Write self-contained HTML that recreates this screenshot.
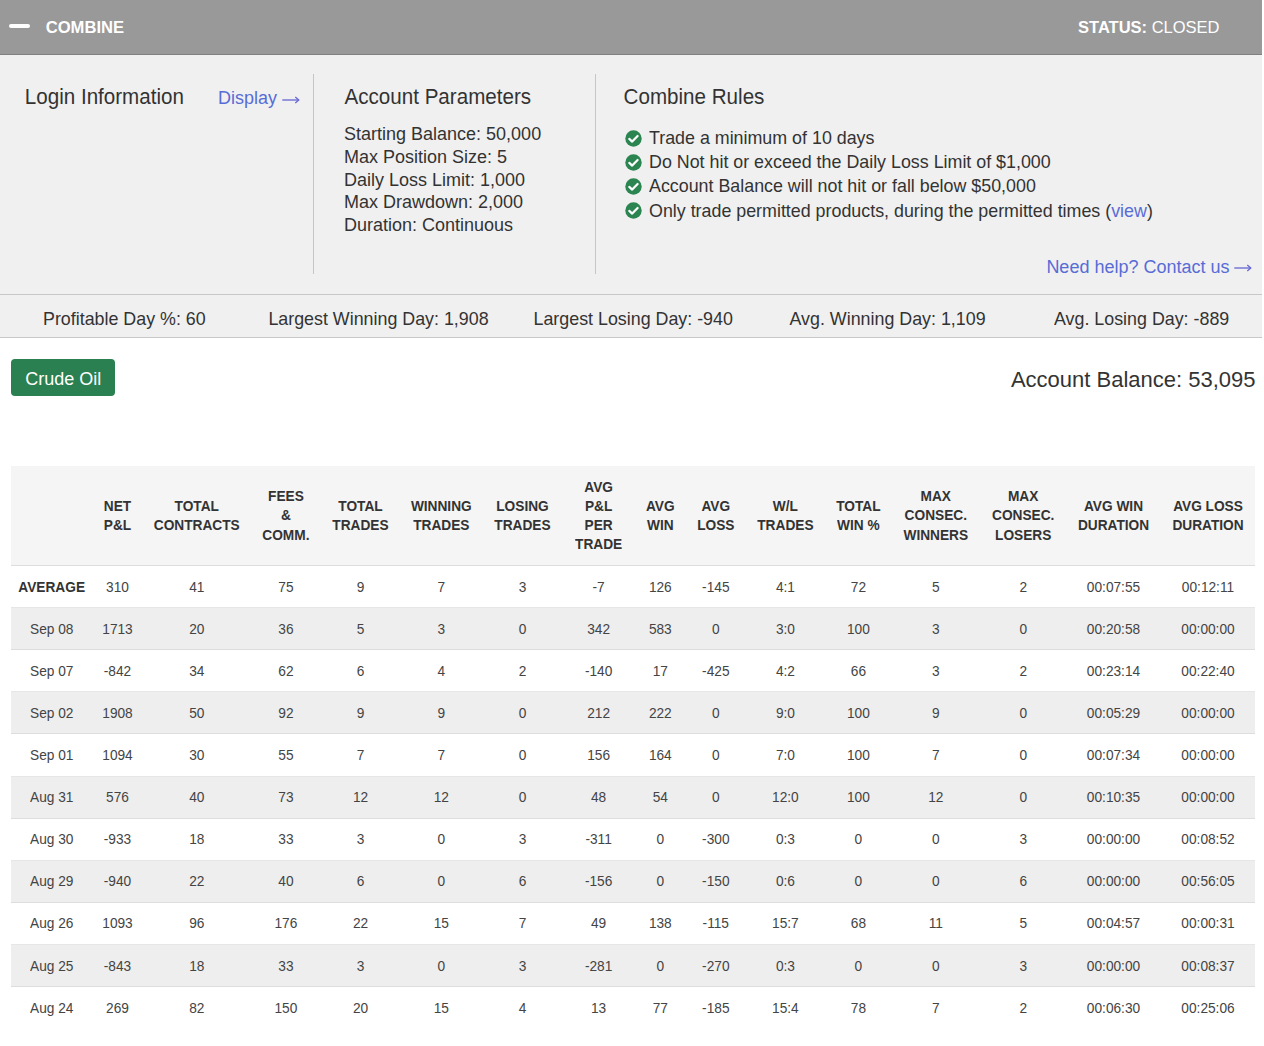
<!DOCTYPE html>
<html><head><meta charset="utf-8"><title>Combine</title>
<style>
html,body{margin:0;padding:0;background:#fff;overflow:hidden;}
body{width:1264px;height:1046px;overflow:hidden;position:relative;font-family:"Liberation Sans",sans-serif;}
.t{position:absolute;white-space:nowrap;line-height:1;}
</style></head><body>
<div style="position:absolute;left:0;top:0;width:1262px;height:54px;background:#999999;border-bottom:1px solid #808080"></div><div style="position:absolute;left:9px;top:24.3px;width:21px;height:3.6px;background:#fff;border-radius:2px"></div><div class="t" style="left:45.7px;top:19.75px;font-size:16.6px;color:#fff;font-weight:700;">COMBINE</div>
<div class="t" style="left:619.5px;width:600px;text-align:right;top:19.13px;font-size:16.5px;color:#fff;font-weight:400;"><b>STATUS:</b> CLOSED</div>
<div style="position:absolute;left:0;top:55px;width:1262px;height:239px;background:#f0f0f0"></div><div style="position:absolute;left:313px;top:74px;width:1px;height:200px;background:#c6c6c6"></div><div style="position:absolute;left:595px;top:74px;width:1px;height:200px;background:#c6c6c6"></div><div class="t" style="left:24.8px;top:86.96px;font-size:20.6px;color:#333;font-weight:400;transform:scaleY(1.07);transform-origin:0 17.44px;">Login Information</div>
<div class="t" style="left:218px;top:89.16px;font-size:18px;color:#586cd6;font-weight:400;">Display</div>
<svg style="position:absolute;left:282.30px;top:95.40px" width="18" height="10" viewBox="0 0 18 10"><path d="M0.3 5 H16.2" stroke="#6464d4" stroke-width="1.3" fill="none"/><path d="M13.3 2 L16.8 5 L13.3 8" stroke="#6464d4" stroke-width="1.2" fill="none" stroke-linejoin="miter"/></svg><div class="t" style="left:344.5px;top:86.96px;font-size:20.6px;color:#333;font-weight:400;transform:scaleY(1.07);transform-origin:0 17.44px;">Account Parameters</div>
<div class="t" style="left:344px;top:125.06px;font-size:18px;color:#333;font-weight:400;transform:scaleY(1.04);transform-origin:0 15.24px;">Starting Balance: 50,000</div>
<div class="t" style="left:344px;top:147.86px;font-size:18px;color:#333;font-weight:400;transform:scaleY(1.04);transform-origin:0 15.24px;">Max Position Size: 5</div>
<div class="t" style="left:344px;top:170.66px;font-size:18px;color:#333;font-weight:400;transform:scaleY(1.04);transform-origin:0 15.24px;">Daily Loss Limit: 1,000</div>
<div class="t" style="left:344px;top:193.46px;font-size:18px;color:#333;font-weight:400;transform:scaleY(1.04);transform-origin:0 15.24px;">Max Drawdown: 2,000</div>
<div class="t" style="left:344px;top:216.26px;font-size:18px;color:#333;font-weight:400;transform:scaleY(1.04);transform-origin:0 15.24px;">Duration: Continuous</div>
<div class="t" style="left:623.6px;top:86.76px;font-size:20.6px;color:#333;font-weight:400;transform:scaleY(1.07);transform-origin:0 17.44px;">Combine Rules</div>
<div style="position:absolute;left:625.3px;top:129.80px;width:17px;height:17px"><svg width="17" height="17" viewBox="0 0 17 17"><circle cx="8.5" cy="8.5" r="8.2" fill="#2b8550"/><path d="M4.3 8.9 L7.2 11.6 L12.6 6" stroke="#fff" stroke-width="2.2" fill="none" stroke-linecap="round" stroke-linejoin="round"/></svg></div><div class="t" style="left:649px;top:129.99px;font-size:17.85px;color:#333;font-weight:400;transform:scaleY(1.05);transform-origin:0 15.11px;">Trade a minimum of 10 days</div>
<div style="position:absolute;left:625.3px;top:153.90px;width:17px;height:17px"><svg width="17" height="17" viewBox="0 0 17 17"><circle cx="8.5" cy="8.5" r="8.2" fill="#2b8550"/><path d="M4.3 8.9 L7.2 11.6 L12.6 6" stroke="#fff" stroke-width="2.2" fill="none" stroke-linecap="round" stroke-linejoin="round"/></svg></div><div class="t" style="left:649px;top:154.19px;font-size:17.85px;color:#333;font-weight:400;transform:scaleY(1.05);transform-origin:0 15.11px;">Do Not hit or exceed the Daily Loss Limit of $1,000</div>
<div style="position:absolute;left:625.3px;top:178.00px;width:17px;height:17px"><svg width="17" height="17" viewBox="0 0 17 17"><circle cx="8.5" cy="8.5" r="8.2" fill="#2b8550"/><path d="M4.3 8.9 L7.2 11.6 L12.6 6" stroke="#fff" stroke-width="2.2" fill="none" stroke-linecap="round" stroke-linejoin="round"/></svg></div><div class="t" style="left:649px;top:178.39px;font-size:17.85px;color:#333;font-weight:400;transform:scaleY(1.05);transform-origin:0 15.11px;">Account Balance will not hit or fall below $50,000</div>
<div style="position:absolute;left:625.3px;top:202.10px;width:17px;height:17px"><svg width="17" height="17" viewBox="0 0 17 17"><circle cx="8.5" cy="8.5" r="8.2" fill="#2b8550"/><path d="M4.3 8.9 L7.2 11.6 L12.6 6" stroke="#fff" stroke-width="2.2" fill="none" stroke-linecap="round" stroke-linejoin="round"/></svg></div><div class="t" style="left:649px;top:202.59px;font-size:17.85px;color:#333;font-weight:400;transform:scaleY(1.05);transform-origin:0 15.11px;">Only trade permitted products, during the permitted times (<span style="color:#586cd6">view</span>)</div>
<div class="t" style="left:629.5px;width:600px;text-align:right;top:257.56px;font-size:18px;color:#586cd6;font-weight:400;">Need help? Contact us</div>
<svg style="position:absolute;left:1234.20px;top:263.20px" width="18" height="10" viewBox="0 0 18 10"><path d="M0.3 5 H16.2" stroke="#6464d4" stroke-width="1.3" fill="none"/><path d="M13.3 2 L16.8 5 L13.3 8" stroke="#6464d4" stroke-width="1.2" fill="none" stroke-linejoin="miter"/></svg><div style="position:absolute;left:0;top:294px;width:1262px;height:42px;background:#f0f0f0;border-top:1px solid #c8c8c8;border-bottom:1px solid #c8c8c8"></div><div class="t" style="left:43.0px;top:310.79px;font-size:17.85px;color:#333;font-weight:400;transform:scaleY(1.05);transform-origin:0 15.11px;">Profitable Day %: 60</div>
<div class="t" style="left:268.4px;top:310.79px;font-size:17.85px;color:#333;font-weight:400;transform:scaleY(1.05);transform-origin:0 15.11px;">Largest Winning Day: 1,908</div>
<div class="t" style="left:533.5px;top:310.79px;font-size:17.85px;color:#333;font-weight:400;transform:scaleY(1.05);transform-origin:0 15.11px;">Largest Losing Day: -940</div>
<div class="t" style="left:789.5px;top:310.79px;font-size:17.85px;color:#333;font-weight:400;transform:scaleY(1.05);transform-origin:0 15.11px;">Avg. Winning Day: 1,109</div>
<div class="t" style="left:1054px;top:310.79px;font-size:17.85px;color:#333;font-weight:400;transform:scaleY(1.05);transform-origin:0 15.11px;">Avg. Losing Day: -889</div>
<div style="position:absolute;left:11px;top:359px;width:104px;height:37px;background:#2a8050;border-radius:4px"></div><div class="t" style="left:25.2px;top:369.66px;font-size:18px;color:#fff;font-weight:400;">Crude Oil</div>
<div class="t" style="left:655.5px;width:600px;text-align:right;top:368.58px;font-size:22px;color:#333;font-weight:400;">Account Balance: 53,095</div>
<div style="position:absolute;left:11px;top:466px;width:1244px;height:99px;background:#f5f5f5;border-bottom:1px solid #dddddd"></div><div class="t" style="left:-32.5px;width:300px;text-align:center;top:499.86px;font-size:13.7px;color:#333;font-weight:700;transform:scaleY(1.12);transform-origin:0 11.60px;">NET</div>
<div class="t" style="left:-32.5px;width:300px;text-align:center;top:518.96px;font-size:13.7px;color:#333;font-weight:700;transform:scaleY(1.12);transform-origin:0 11.60px;">P&amp;L</div>
<div class="t" style="left:46.80000000000001px;width:300px;text-align:center;top:499.86px;font-size:13.7px;color:#333;font-weight:700;transform:scaleY(1.12);transform-origin:0 11.60px;">TOTAL</div>
<div class="t" style="left:46.80000000000001px;width:300px;text-align:center;top:518.96px;font-size:13.7px;color:#333;font-weight:700;transform:scaleY(1.12);transform-origin:0 11.60px;">CONTRACTS</div>
<div class="t" style="left:135.89999999999998px;width:300px;text-align:center;top:490.31px;font-size:13.7px;color:#333;font-weight:700;transform:scaleY(1.12);transform-origin:0 11.60px;">FEES</div>
<div class="t" style="left:135.89999999999998px;width:300px;text-align:center;top:509.41px;font-size:13.7px;color:#333;font-weight:700;transform:scaleY(1.12);transform-origin:0 11.60px;">&amp;</div>
<div class="t" style="left:135.89999999999998px;width:300px;text-align:center;top:528.51px;font-size:13.7px;color:#333;font-weight:700;transform:scaleY(1.12);transform-origin:0 11.60px;">COMM.</div>
<div class="t" style="left:210.5px;width:300px;text-align:center;top:499.86px;font-size:13.7px;color:#333;font-weight:700;transform:scaleY(1.12);transform-origin:0 11.60px;">TOTAL</div>
<div class="t" style="left:210.5px;width:300px;text-align:center;top:518.96px;font-size:13.7px;color:#333;font-weight:700;transform:scaleY(1.12);transform-origin:0 11.60px;">TRADES</div>
<div class="t" style="left:291.3px;width:300px;text-align:center;top:499.86px;font-size:13.7px;color:#333;font-weight:700;transform:scaleY(1.12);transform-origin:0 11.60px;">WINNING</div>
<div class="t" style="left:291.3px;width:300px;text-align:center;top:518.96px;font-size:13.7px;color:#333;font-weight:700;transform:scaleY(1.12);transform-origin:0 11.60px;">TRADES</div>
<div class="t" style="left:372.5px;width:300px;text-align:center;top:499.86px;font-size:13.7px;color:#333;font-weight:700;transform:scaleY(1.12);transform-origin:0 11.60px;">LOSING</div>
<div class="t" style="left:372.5px;width:300px;text-align:center;top:518.96px;font-size:13.7px;color:#333;font-weight:700;transform:scaleY(1.12);transform-origin:0 11.60px;">TRADES</div>
<div class="t" style="left:448.6px;width:300px;text-align:center;top:480.76px;font-size:13.7px;color:#333;font-weight:700;transform:scaleY(1.12);transform-origin:0 11.60px;">AVG</div>
<div class="t" style="left:448.6px;width:300px;text-align:center;top:499.86px;font-size:13.7px;color:#333;font-weight:700;transform:scaleY(1.12);transform-origin:0 11.60px;">P&amp;L</div>
<div class="t" style="left:448.6px;width:300px;text-align:center;top:518.96px;font-size:13.7px;color:#333;font-weight:700;transform:scaleY(1.12);transform-origin:0 11.60px;">PER</div>
<div class="t" style="left:448.6px;width:300px;text-align:center;top:538.06px;font-size:13.7px;color:#333;font-weight:700;transform:scaleY(1.12);transform-origin:0 11.60px;">TRADE</div>
<div class="t" style="left:510.29999999999995px;width:300px;text-align:center;top:499.86px;font-size:13.7px;color:#333;font-weight:700;transform:scaleY(1.12);transform-origin:0 11.60px;">AVG</div>
<div class="t" style="left:510.29999999999995px;width:300px;text-align:center;top:518.96px;font-size:13.7px;color:#333;font-weight:700;transform:scaleY(1.12);transform-origin:0 11.60px;">WIN</div>
<div class="t" style="left:565.8px;width:300px;text-align:center;top:499.86px;font-size:13.7px;color:#333;font-weight:700;transform:scaleY(1.12);transform-origin:0 11.60px;">AVG</div>
<div class="t" style="left:565.8px;width:300px;text-align:center;top:518.96px;font-size:13.7px;color:#333;font-weight:700;transform:scaleY(1.12);transform-origin:0 11.60px;">LOSS</div>
<div class="t" style="left:635.4px;width:300px;text-align:center;top:499.86px;font-size:13.7px;color:#333;font-weight:700;transform:scaleY(1.12);transform-origin:0 11.60px;">W/L</div>
<div class="t" style="left:635.4px;width:300px;text-align:center;top:518.96px;font-size:13.7px;color:#333;font-weight:700;transform:scaleY(1.12);transform-origin:0 11.60px;">TRADES</div>
<div class="t" style="left:708.4px;width:300px;text-align:center;top:499.86px;font-size:13.7px;color:#333;font-weight:700;transform:scaleY(1.12);transform-origin:0 11.60px;">TOTAL</div>
<div class="t" style="left:708.4px;width:300px;text-align:center;top:518.96px;font-size:13.7px;color:#333;font-weight:700;transform:scaleY(1.12);transform-origin:0 11.60px;">WIN %</div>
<div class="t" style="left:785.8px;width:300px;text-align:center;top:490.31px;font-size:13.7px;color:#333;font-weight:700;transform:scaleY(1.12);transform-origin:0 11.60px;">MAX</div>
<div class="t" style="left:785.8px;width:300px;text-align:center;top:509.41px;font-size:13.7px;color:#333;font-weight:700;transform:scaleY(1.12);transform-origin:0 11.60px;">CONSEC.</div>
<div class="t" style="left:785.8px;width:300px;text-align:center;top:528.51px;font-size:13.7px;color:#333;font-weight:700;transform:scaleY(1.12);transform-origin:0 11.60px;">WINNERS</div>
<div class="t" style="left:873.2px;width:300px;text-align:center;top:490.31px;font-size:13.7px;color:#333;font-weight:700;transform:scaleY(1.12);transform-origin:0 11.60px;">MAX</div>
<div class="t" style="left:873.2px;width:300px;text-align:center;top:509.41px;font-size:13.7px;color:#333;font-weight:700;transform:scaleY(1.12);transform-origin:0 11.60px;">CONSEC.</div>
<div class="t" style="left:873.2px;width:300px;text-align:center;top:528.51px;font-size:13.7px;color:#333;font-weight:700;transform:scaleY(1.12);transform-origin:0 11.60px;">LOSERS</div>
<div class="t" style="left:963.5px;width:300px;text-align:center;top:499.86px;font-size:13.7px;color:#333;font-weight:700;transform:scaleY(1.12);transform-origin:0 11.60px;">AVG WIN</div>
<div class="t" style="left:963.5px;width:300px;text-align:center;top:518.96px;font-size:13.7px;color:#333;font-weight:700;transform:scaleY(1.12);transform-origin:0 11.60px;">DURATION</div>
<div class="t" style="left:1058px;width:300px;text-align:center;top:499.86px;font-size:13.7px;color:#333;font-weight:700;transform:scaleY(1.12);transform-origin:0 11.60px;">AVG LOSS</div>
<div class="t" style="left:1058px;width:300px;text-align:center;top:518.96px;font-size:13.7px;color:#333;font-weight:700;transform:scaleY(1.12);transform-origin:0 11.60px;">DURATION</div>
<div class="t" style="left:-98.3px;width:300px;text-align:center;top:580.60px;font-size:13.7px;color:#333;font-weight:700;transform:scaleY(1.12);transform-origin:0 11.60px;">AVERAGE</div>
<div class="t" style="left:-32.5px;width:300px;text-align:center;top:580.60px;font-size:13.7px;color:#444;font-weight:400;transform:scaleY(1.12);transform-origin:0 11.60px;">310</div>
<div class="t" style="left:46.80000000000001px;width:300px;text-align:center;top:580.60px;font-size:13.7px;color:#444;font-weight:400;transform:scaleY(1.12);transform-origin:0 11.60px;">41</div>
<div class="t" style="left:135.89999999999998px;width:300px;text-align:center;top:580.60px;font-size:13.7px;color:#444;font-weight:400;transform:scaleY(1.12);transform-origin:0 11.60px;">75</div>
<div class="t" style="left:210.5px;width:300px;text-align:center;top:580.60px;font-size:13.7px;color:#444;font-weight:400;transform:scaleY(1.12);transform-origin:0 11.60px;">9</div>
<div class="t" style="left:291.3px;width:300px;text-align:center;top:580.60px;font-size:13.7px;color:#444;font-weight:400;transform:scaleY(1.12);transform-origin:0 11.60px;">7</div>
<div class="t" style="left:372.5px;width:300px;text-align:center;top:580.60px;font-size:13.7px;color:#444;font-weight:400;transform:scaleY(1.12);transform-origin:0 11.60px;">3</div>
<div class="t" style="left:448.6px;width:300px;text-align:center;top:580.60px;font-size:13.7px;color:#444;font-weight:400;transform:scaleY(1.12);transform-origin:0 11.60px;">-7</div>
<div class="t" style="left:510.29999999999995px;width:300px;text-align:center;top:580.60px;font-size:13.7px;color:#444;font-weight:400;transform:scaleY(1.12);transform-origin:0 11.60px;">126</div>
<div class="t" style="left:565.8px;width:300px;text-align:center;top:580.60px;font-size:13.7px;color:#444;font-weight:400;transform:scaleY(1.12);transform-origin:0 11.60px;">-145</div>
<div class="t" style="left:635.4px;width:300px;text-align:center;top:580.60px;font-size:13.7px;color:#444;font-weight:400;transform:scaleY(1.12);transform-origin:0 11.60px;">4:1</div>
<div class="t" style="left:708.4px;width:300px;text-align:center;top:580.60px;font-size:13.7px;color:#444;font-weight:400;transform:scaleY(1.12);transform-origin:0 11.60px;">72</div>
<div class="t" style="left:785.8px;width:300px;text-align:center;top:580.60px;font-size:13.7px;color:#444;font-weight:400;transform:scaleY(1.12);transform-origin:0 11.60px;">5</div>
<div class="t" style="left:873.2px;width:300px;text-align:center;top:580.60px;font-size:13.7px;color:#444;font-weight:400;transform:scaleY(1.12);transform-origin:0 11.60px;">2</div>
<div class="t" style="left:963.5px;width:300px;text-align:center;top:580.60px;font-size:13.7px;color:#444;font-weight:400;transform:scaleY(1.12);transform-origin:0 11.60px;">00:07:55</div>
<div class="t" style="left:1058px;width:300px;text-align:center;top:580.60px;font-size:13.7px;color:#444;font-weight:400;transform:scaleY(1.12);transform-origin:0 11.60px;">00:12:11</div>
<div style="position:absolute;left:11px;top:607.10px;width:1244px;height:43px;box-sizing:border-box;background:#eeeeee;border-top:1px solid #e6e6e6;border-bottom:1px solid #dddddd"></div><div class="t" style="left:-98.3px;width:300px;text-align:center;top:622.70px;font-size:13.7px;color:#444;font-weight:400;transform:scaleY(1.12);transform-origin:0 11.60px;">Sep 08</div>
<div class="t" style="left:-32.5px;width:300px;text-align:center;top:622.70px;font-size:13.7px;color:#444;font-weight:400;transform:scaleY(1.12);transform-origin:0 11.60px;">1713</div>
<div class="t" style="left:46.80000000000001px;width:300px;text-align:center;top:622.70px;font-size:13.7px;color:#444;font-weight:400;transform:scaleY(1.12);transform-origin:0 11.60px;">20</div>
<div class="t" style="left:135.89999999999998px;width:300px;text-align:center;top:622.70px;font-size:13.7px;color:#444;font-weight:400;transform:scaleY(1.12);transform-origin:0 11.60px;">36</div>
<div class="t" style="left:210.5px;width:300px;text-align:center;top:622.70px;font-size:13.7px;color:#444;font-weight:400;transform:scaleY(1.12);transform-origin:0 11.60px;">5</div>
<div class="t" style="left:291.3px;width:300px;text-align:center;top:622.70px;font-size:13.7px;color:#444;font-weight:400;transform:scaleY(1.12);transform-origin:0 11.60px;">3</div>
<div class="t" style="left:372.5px;width:300px;text-align:center;top:622.70px;font-size:13.7px;color:#444;font-weight:400;transform:scaleY(1.12);transform-origin:0 11.60px;">0</div>
<div class="t" style="left:448.6px;width:300px;text-align:center;top:622.70px;font-size:13.7px;color:#444;font-weight:400;transform:scaleY(1.12);transform-origin:0 11.60px;">342</div>
<div class="t" style="left:510.29999999999995px;width:300px;text-align:center;top:622.70px;font-size:13.7px;color:#444;font-weight:400;transform:scaleY(1.12);transform-origin:0 11.60px;">583</div>
<div class="t" style="left:565.8px;width:300px;text-align:center;top:622.70px;font-size:13.7px;color:#444;font-weight:400;transform:scaleY(1.12);transform-origin:0 11.60px;">0</div>
<div class="t" style="left:635.4px;width:300px;text-align:center;top:622.70px;font-size:13.7px;color:#444;font-weight:400;transform:scaleY(1.12);transform-origin:0 11.60px;">3:0</div>
<div class="t" style="left:708.4px;width:300px;text-align:center;top:622.70px;font-size:13.7px;color:#444;font-weight:400;transform:scaleY(1.12);transform-origin:0 11.60px;">100</div>
<div class="t" style="left:785.8px;width:300px;text-align:center;top:622.70px;font-size:13.7px;color:#444;font-weight:400;transform:scaleY(1.12);transform-origin:0 11.60px;">3</div>
<div class="t" style="left:873.2px;width:300px;text-align:center;top:622.70px;font-size:13.7px;color:#444;font-weight:400;transform:scaleY(1.12);transform-origin:0 11.60px;">0</div>
<div class="t" style="left:963.5px;width:300px;text-align:center;top:622.70px;font-size:13.7px;color:#444;font-weight:400;transform:scaleY(1.12);transform-origin:0 11.60px;">00:20:58</div>
<div class="t" style="left:1058px;width:300px;text-align:center;top:622.70px;font-size:13.7px;color:#444;font-weight:400;transform:scaleY(1.12);transform-origin:0 11.60px;">00:00:00</div>
<div class="t" style="left:-98.3px;width:300px;text-align:center;top:664.80px;font-size:13.7px;color:#444;font-weight:400;transform:scaleY(1.12);transform-origin:0 11.60px;">Sep 07</div>
<div class="t" style="left:-32.5px;width:300px;text-align:center;top:664.80px;font-size:13.7px;color:#444;font-weight:400;transform:scaleY(1.12);transform-origin:0 11.60px;">-842</div>
<div class="t" style="left:46.80000000000001px;width:300px;text-align:center;top:664.80px;font-size:13.7px;color:#444;font-weight:400;transform:scaleY(1.12);transform-origin:0 11.60px;">34</div>
<div class="t" style="left:135.89999999999998px;width:300px;text-align:center;top:664.80px;font-size:13.7px;color:#444;font-weight:400;transform:scaleY(1.12);transform-origin:0 11.60px;">62</div>
<div class="t" style="left:210.5px;width:300px;text-align:center;top:664.80px;font-size:13.7px;color:#444;font-weight:400;transform:scaleY(1.12);transform-origin:0 11.60px;">6</div>
<div class="t" style="left:291.3px;width:300px;text-align:center;top:664.80px;font-size:13.7px;color:#444;font-weight:400;transform:scaleY(1.12);transform-origin:0 11.60px;">4</div>
<div class="t" style="left:372.5px;width:300px;text-align:center;top:664.80px;font-size:13.7px;color:#444;font-weight:400;transform:scaleY(1.12);transform-origin:0 11.60px;">2</div>
<div class="t" style="left:448.6px;width:300px;text-align:center;top:664.80px;font-size:13.7px;color:#444;font-weight:400;transform:scaleY(1.12);transform-origin:0 11.60px;">-140</div>
<div class="t" style="left:510.29999999999995px;width:300px;text-align:center;top:664.80px;font-size:13.7px;color:#444;font-weight:400;transform:scaleY(1.12);transform-origin:0 11.60px;">17</div>
<div class="t" style="left:565.8px;width:300px;text-align:center;top:664.80px;font-size:13.7px;color:#444;font-weight:400;transform:scaleY(1.12);transform-origin:0 11.60px;">-425</div>
<div class="t" style="left:635.4px;width:300px;text-align:center;top:664.80px;font-size:13.7px;color:#444;font-weight:400;transform:scaleY(1.12);transform-origin:0 11.60px;">4:2</div>
<div class="t" style="left:708.4px;width:300px;text-align:center;top:664.80px;font-size:13.7px;color:#444;font-weight:400;transform:scaleY(1.12);transform-origin:0 11.60px;">66</div>
<div class="t" style="left:785.8px;width:300px;text-align:center;top:664.80px;font-size:13.7px;color:#444;font-weight:400;transform:scaleY(1.12);transform-origin:0 11.60px;">3</div>
<div class="t" style="left:873.2px;width:300px;text-align:center;top:664.80px;font-size:13.7px;color:#444;font-weight:400;transform:scaleY(1.12);transform-origin:0 11.60px;">2</div>
<div class="t" style="left:963.5px;width:300px;text-align:center;top:664.80px;font-size:13.7px;color:#444;font-weight:400;transform:scaleY(1.12);transform-origin:0 11.60px;">00:23:14</div>
<div class="t" style="left:1058px;width:300px;text-align:center;top:664.80px;font-size:13.7px;color:#444;font-weight:400;transform:scaleY(1.12);transform-origin:0 11.60px;">00:22:40</div>
<div style="position:absolute;left:11px;top:691.30px;width:1244px;height:43px;box-sizing:border-box;background:#eeeeee;border-top:1px solid #e6e6e6;border-bottom:1px solid #dddddd"></div><div class="t" style="left:-98.3px;width:300px;text-align:center;top:706.90px;font-size:13.7px;color:#444;font-weight:400;transform:scaleY(1.12);transform-origin:0 11.60px;">Sep 02</div>
<div class="t" style="left:-32.5px;width:300px;text-align:center;top:706.90px;font-size:13.7px;color:#444;font-weight:400;transform:scaleY(1.12);transform-origin:0 11.60px;">1908</div>
<div class="t" style="left:46.80000000000001px;width:300px;text-align:center;top:706.90px;font-size:13.7px;color:#444;font-weight:400;transform:scaleY(1.12);transform-origin:0 11.60px;">50</div>
<div class="t" style="left:135.89999999999998px;width:300px;text-align:center;top:706.90px;font-size:13.7px;color:#444;font-weight:400;transform:scaleY(1.12);transform-origin:0 11.60px;">92</div>
<div class="t" style="left:210.5px;width:300px;text-align:center;top:706.90px;font-size:13.7px;color:#444;font-weight:400;transform:scaleY(1.12);transform-origin:0 11.60px;">9</div>
<div class="t" style="left:291.3px;width:300px;text-align:center;top:706.90px;font-size:13.7px;color:#444;font-weight:400;transform:scaleY(1.12);transform-origin:0 11.60px;">9</div>
<div class="t" style="left:372.5px;width:300px;text-align:center;top:706.90px;font-size:13.7px;color:#444;font-weight:400;transform:scaleY(1.12);transform-origin:0 11.60px;">0</div>
<div class="t" style="left:448.6px;width:300px;text-align:center;top:706.90px;font-size:13.7px;color:#444;font-weight:400;transform:scaleY(1.12);transform-origin:0 11.60px;">212</div>
<div class="t" style="left:510.29999999999995px;width:300px;text-align:center;top:706.90px;font-size:13.7px;color:#444;font-weight:400;transform:scaleY(1.12);transform-origin:0 11.60px;">222</div>
<div class="t" style="left:565.8px;width:300px;text-align:center;top:706.90px;font-size:13.7px;color:#444;font-weight:400;transform:scaleY(1.12);transform-origin:0 11.60px;">0</div>
<div class="t" style="left:635.4px;width:300px;text-align:center;top:706.90px;font-size:13.7px;color:#444;font-weight:400;transform:scaleY(1.12);transform-origin:0 11.60px;">9:0</div>
<div class="t" style="left:708.4px;width:300px;text-align:center;top:706.90px;font-size:13.7px;color:#444;font-weight:400;transform:scaleY(1.12);transform-origin:0 11.60px;">100</div>
<div class="t" style="left:785.8px;width:300px;text-align:center;top:706.90px;font-size:13.7px;color:#444;font-weight:400;transform:scaleY(1.12);transform-origin:0 11.60px;">9</div>
<div class="t" style="left:873.2px;width:300px;text-align:center;top:706.90px;font-size:13.7px;color:#444;font-weight:400;transform:scaleY(1.12);transform-origin:0 11.60px;">0</div>
<div class="t" style="left:963.5px;width:300px;text-align:center;top:706.90px;font-size:13.7px;color:#444;font-weight:400;transform:scaleY(1.12);transform-origin:0 11.60px;">00:05:29</div>
<div class="t" style="left:1058px;width:300px;text-align:center;top:706.90px;font-size:13.7px;color:#444;font-weight:400;transform:scaleY(1.12);transform-origin:0 11.60px;">00:00:00</div>
<div class="t" style="left:-98.3px;width:300px;text-align:center;top:749.00px;font-size:13.7px;color:#444;font-weight:400;transform:scaleY(1.12);transform-origin:0 11.60px;">Sep 01</div>
<div class="t" style="left:-32.5px;width:300px;text-align:center;top:749.00px;font-size:13.7px;color:#444;font-weight:400;transform:scaleY(1.12);transform-origin:0 11.60px;">1094</div>
<div class="t" style="left:46.80000000000001px;width:300px;text-align:center;top:749.00px;font-size:13.7px;color:#444;font-weight:400;transform:scaleY(1.12);transform-origin:0 11.60px;">30</div>
<div class="t" style="left:135.89999999999998px;width:300px;text-align:center;top:749.00px;font-size:13.7px;color:#444;font-weight:400;transform:scaleY(1.12);transform-origin:0 11.60px;">55</div>
<div class="t" style="left:210.5px;width:300px;text-align:center;top:749.00px;font-size:13.7px;color:#444;font-weight:400;transform:scaleY(1.12);transform-origin:0 11.60px;">7</div>
<div class="t" style="left:291.3px;width:300px;text-align:center;top:749.00px;font-size:13.7px;color:#444;font-weight:400;transform:scaleY(1.12);transform-origin:0 11.60px;">7</div>
<div class="t" style="left:372.5px;width:300px;text-align:center;top:749.00px;font-size:13.7px;color:#444;font-weight:400;transform:scaleY(1.12);transform-origin:0 11.60px;">0</div>
<div class="t" style="left:448.6px;width:300px;text-align:center;top:749.00px;font-size:13.7px;color:#444;font-weight:400;transform:scaleY(1.12);transform-origin:0 11.60px;">156</div>
<div class="t" style="left:510.29999999999995px;width:300px;text-align:center;top:749.00px;font-size:13.7px;color:#444;font-weight:400;transform:scaleY(1.12);transform-origin:0 11.60px;">164</div>
<div class="t" style="left:565.8px;width:300px;text-align:center;top:749.00px;font-size:13.7px;color:#444;font-weight:400;transform:scaleY(1.12);transform-origin:0 11.60px;">0</div>
<div class="t" style="left:635.4px;width:300px;text-align:center;top:749.00px;font-size:13.7px;color:#444;font-weight:400;transform:scaleY(1.12);transform-origin:0 11.60px;">7:0</div>
<div class="t" style="left:708.4px;width:300px;text-align:center;top:749.00px;font-size:13.7px;color:#444;font-weight:400;transform:scaleY(1.12);transform-origin:0 11.60px;">100</div>
<div class="t" style="left:785.8px;width:300px;text-align:center;top:749.00px;font-size:13.7px;color:#444;font-weight:400;transform:scaleY(1.12);transform-origin:0 11.60px;">7</div>
<div class="t" style="left:873.2px;width:300px;text-align:center;top:749.00px;font-size:13.7px;color:#444;font-weight:400;transform:scaleY(1.12);transform-origin:0 11.60px;">0</div>
<div class="t" style="left:963.5px;width:300px;text-align:center;top:749.00px;font-size:13.7px;color:#444;font-weight:400;transform:scaleY(1.12);transform-origin:0 11.60px;">00:07:34</div>
<div class="t" style="left:1058px;width:300px;text-align:center;top:749.00px;font-size:13.7px;color:#444;font-weight:400;transform:scaleY(1.12);transform-origin:0 11.60px;">00:00:00</div>
<div style="position:absolute;left:11px;top:775.50px;width:1244px;height:43px;box-sizing:border-box;background:#eeeeee;border-top:1px solid #e6e6e6;border-bottom:1px solid #dddddd"></div><div class="t" style="left:-98.3px;width:300px;text-align:center;top:791.10px;font-size:13.7px;color:#444;font-weight:400;transform:scaleY(1.12);transform-origin:0 11.60px;">Aug 31</div>
<div class="t" style="left:-32.5px;width:300px;text-align:center;top:791.10px;font-size:13.7px;color:#444;font-weight:400;transform:scaleY(1.12);transform-origin:0 11.60px;">576</div>
<div class="t" style="left:46.80000000000001px;width:300px;text-align:center;top:791.10px;font-size:13.7px;color:#444;font-weight:400;transform:scaleY(1.12);transform-origin:0 11.60px;">40</div>
<div class="t" style="left:135.89999999999998px;width:300px;text-align:center;top:791.10px;font-size:13.7px;color:#444;font-weight:400;transform:scaleY(1.12);transform-origin:0 11.60px;">73</div>
<div class="t" style="left:210.5px;width:300px;text-align:center;top:791.10px;font-size:13.7px;color:#444;font-weight:400;transform:scaleY(1.12);transform-origin:0 11.60px;">12</div>
<div class="t" style="left:291.3px;width:300px;text-align:center;top:791.10px;font-size:13.7px;color:#444;font-weight:400;transform:scaleY(1.12);transform-origin:0 11.60px;">12</div>
<div class="t" style="left:372.5px;width:300px;text-align:center;top:791.10px;font-size:13.7px;color:#444;font-weight:400;transform:scaleY(1.12);transform-origin:0 11.60px;">0</div>
<div class="t" style="left:448.6px;width:300px;text-align:center;top:791.10px;font-size:13.7px;color:#444;font-weight:400;transform:scaleY(1.12);transform-origin:0 11.60px;">48</div>
<div class="t" style="left:510.29999999999995px;width:300px;text-align:center;top:791.10px;font-size:13.7px;color:#444;font-weight:400;transform:scaleY(1.12);transform-origin:0 11.60px;">54</div>
<div class="t" style="left:565.8px;width:300px;text-align:center;top:791.10px;font-size:13.7px;color:#444;font-weight:400;transform:scaleY(1.12);transform-origin:0 11.60px;">0</div>
<div class="t" style="left:635.4px;width:300px;text-align:center;top:791.10px;font-size:13.7px;color:#444;font-weight:400;transform:scaleY(1.12);transform-origin:0 11.60px;">12:0</div>
<div class="t" style="left:708.4px;width:300px;text-align:center;top:791.10px;font-size:13.7px;color:#444;font-weight:400;transform:scaleY(1.12);transform-origin:0 11.60px;">100</div>
<div class="t" style="left:785.8px;width:300px;text-align:center;top:791.10px;font-size:13.7px;color:#444;font-weight:400;transform:scaleY(1.12);transform-origin:0 11.60px;">12</div>
<div class="t" style="left:873.2px;width:300px;text-align:center;top:791.10px;font-size:13.7px;color:#444;font-weight:400;transform:scaleY(1.12);transform-origin:0 11.60px;">0</div>
<div class="t" style="left:963.5px;width:300px;text-align:center;top:791.10px;font-size:13.7px;color:#444;font-weight:400;transform:scaleY(1.12);transform-origin:0 11.60px;">00:10:35</div>
<div class="t" style="left:1058px;width:300px;text-align:center;top:791.10px;font-size:13.7px;color:#444;font-weight:400;transform:scaleY(1.12);transform-origin:0 11.60px;">00:00:00</div>
<div class="t" style="left:-98.3px;width:300px;text-align:center;top:833.20px;font-size:13.7px;color:#444;font-weight:400;transform:scaleY(1.12);transform-origin:0 11.60px;">Aug 30</div>
<div class="t" style="left:-32.5px;width:300px;text-align:center;top:833.20px;font-size:13.7px;color:#444;font-weight:400;transform:scaleY(1.12);transform-origin:0 11.60px;">-933</div>
<div class="t" style="left:46.80000000000001px;width:300px;text-align:center;top:833.20px;font-size:13.7px;color:#444;font-weight:400;transform:scaleY(1.12);transform-origin:0 11.60px;">18</div>
<div class="t" style="left:135.89999999999998px;width:300px;text-align:center;top:833.20px;font-size:13.7px;color:#444;font-weight:400;transform:scaleY(1.12);transform-origin:0 11.60px;">33</div>
<div class="t" style="left:210.5px;width:300px;text-align:center;top:833.20px;font-size:13.7px;color:#444;font-weight:400;transform:scaleY(1.12);transform-origin:0 11.60px;">3</div>
<div class="t" style="left:291.3px;width:300px;text-align:center;top:833.20px;font-size:13.7px;color:#444;font-weight:400;transform:scaleY(1.12);transform-origin:0 11.60px;">0</div>
<div class="t" style="left:372.5px;width:300px;text-align:center;top:833.20px;font-size:13.7px;color:#444;font-weight:400;transform:scaleY(1.12);transform-origin:0 11.60px;">3</div>
<div class="t" style="left:448.6px;width:300px;text-align:center;top:833.20px;font-size:13.7px;color:#444;font-weight:400;transform:scaleY(1.12);transform-origin:0 11.60px;">-311</div>
<div class="t" style="left:510.29999999999995px;width:300px;text-align:center;top:833.20px;font-size:13.7px;color:#444;font-weight:400;transform:scaleY(1.12);transform-origin:0 11.60px;">0</div>
<div class="t" style="left:565.8px;width:300px;text-align:center;top:833.20px;font-size:13.7px;color:#444;font-weight:400;transform:scaleY(1.12);transform-origin:0 11.60px;">-300</div>
<div class="t" style="left:635.4px;width:300px;text-align:center;top:833.20px;font-size:13.7px;color:#444;font-weight:400;transform:scaleY(1.12);transform-origin:0 11.60px;">0:3</div>
<div class="t" style="left:708.4px;width:300px;text-align:center;top:833.20px;font-size:13.7px;color:#444;font-weight:400;transform:scaleY(1.12);transform-origin:0 11.60px;">0</div>
<div class="t" style="left:785.8px;width:300px;text-align:center;top:833.20px;font-size:13.7px;color:#444;font-weight:400;transform:scaleY(1.12);transform-origin:0 11.60px;">0</div>
<div class="t" style="left:873.2px;width:300px;text-align:center;top:833.20px;font-size:13.7px;color:#444;font-weight:400;transform:scaleY(1.12);transform-origin:0 11.60px;">3</div>
<div class="t" style="left:963.5px;width:300px;text-align:center;top:833.20px;font-size:13.7px;color:#444;font-weight:400;transform:scaleY(1.12);transform-origin:0 11.60px;">00:00:00</div>
<div class="t" style="left:1058px;width:300px;text-align:center;top:833.20px;font-size:13.7px;color:#444;font-weight:400;transform:scaleY(1.12);transform-origin:0 11.60px;">00:08:52</div>
<div style="position:absolute;left:11px;top:859.70px;width:1244px;height:43px;box-sizing:border-box;background:#eeeeee;border-top:1px solid #e6e6e6;border-bottom:1px solid #dddddd"></div><div class="t" style="left:-98.3px;width:300px;text-align:center;top:875.30px;font-size:13.7px;color:#444;font-weight:400;transform:scaleY(1.12);transform-origin:0 11.60px;">Aug 29</div>
<div class="t" style="left:-32.5px;width:300px;text-align:center;top:875.30px;font-size:13.7px;color:#444;font-weight:400;transform:scaleY(1.12);transform-origin:0 11.60px;">-940</div>
<div class="t" style="left:46.80000000000001px;width:300px;text-align:center;top:875.30px;font-size:13.7px;color:#444;font-weight:400;transform:scaleY(1.12);transform-origin:0 11.60px;">22</div>
<div class="t" style="left:135.89999999999998px;width:300px;text-align:center;top:875.30px;font-size:13.7px;color:#444;font-weight:400;transform:scaleY(1.12);transform-origin:0 11.60px;">40</div>
<div class="t" style="left:210.5px;width:300px;text-align:center;top:875.30px;font-size:13.7px;color:#444;font-weight:400;transform:scaleY(1.12);transform-origin:0 11.60px;">6</div>
<div class="t" style="left:291.3px;width:300px;text-align:center;top:875.30px;font-size:13.7px;color:#444;font-weight:400;transform:scaleY(1.12);transform-origin:0 11.60px;">0</div>
<div class="t" style="left:372.5px;width:300px;text-align:center;top:875.30px;font-size:13.7px;color:#444;font-weight:400;transform:scaleY(1.12);transform-origin:0 11.60px;">6</div>
<div class="t" style="left:448.6px;width:300px;text-align:center;top:875.30px;font-size:13.7px;color:#444;font-weight:400;transform:scaleY(1.12);transform-origin:0 11.60px;">-156</div>
<div class="t" style="left:510.29999999999995px;width:300px;text-align:center;top:875.30px;font-size:13.7px;color:#444;font-weight:400;transform:scaleY(1.12);transform-origin:0 11.60px;">0</div>
<div class="t" style="left:565.8px;width:300px;text-align:center;top:875.30px;font-size:13.7px;color:#444;font-weight:400;transform:scaleY(1.12);transform-origin:0 11.60px;">-150</div>
<div class="t" style="left:635.4px;width:300px;text-align:center;top:875.30px;font-size:13.7px;color:#444;font-weight:400;transform:scaleY(1.12);transform-origin:0 11.60px;">0:6</div>
<div class="t" style="left:708.4px;width:300px;text-align:center;top:875.30px;font-size:13.7px;color:#444;font-weight:400;transform:scaleY(1.12);transform-origin:0 11.60px;">0</div>
<div class="t" style="left:785.8px;width:300px;text-align:center;top:875.30px;font-size:13.7px;color:#444;font-weight:400;transform:scaleY(1.12);transform-origin:0 11.60px;">0</div>
<div class="t" style="left:873.2px;width:300px;text-align:center;top:875.30px;font-size:13.7px;color:#444;font-weight:400;transform:scaleY(1.12);transform-origin:0 11.60px;">6</div>
<div class="t" style="left:963.5px;width:300px;text-align:center;top:875.30px;font-size:13.7px;color:#444;font-weight:400;transform:scaleY(1.12);transform-origin:0 11.60px;">00:00:00</div>
<div class="t" style="left:1058px;width:300px;text-align:center;top:875.30px;font-size:13.7px;color:#444;font-weight:400;transform:scaleY(1.12);transform-origin:0 11.60px;">00:56:05</div>
<div class="t" style="left:-98.3px;width:300px;text-align:center;top:917.40px;font-size:13.7px;color:#444;font-weight:400;transform:scaleY(1.12);transform-origin:0 11.60px;">Aug 26</div>
<div class="t" style="left:-32.5px;width:300px;text-align:center;top:917.40px;font-size:13.7px;color:#444;font-weight:400;transform:scaleY(1.12);transform-origin:0 11.60px;">1093</div>
<div class="t" style="left:46.80000000000001px;width:300px;text-align:center;top:917.40px;font-size:13.7px;color:#444;font-weight:400;transform:scaleY(1.12);transform-origin:0 11.60px;">96</div>
<div class="t" style="left:135.89999999999998px;width:300px;text-align:center;top:917.40px;font-size:13.7px;color:#444;font-weight:400;transform:scaleY(1.12);transform-origin:0 11.60px;">176</div>
<div class="t" style="left:210.5px;width:300px;text-align:center;top:917.40px;font-size:13.7px;color:#444;font-weight:400;transform:scaleY(1.12);transform-origin:0 11.60px;">22</div>
<div class="t" style="left:291.3px;width:300px;text-align:center;top:917.40px;font-size:13.7px;color:#444;font-weight:400;transform:scaleY(1.12);transform-origin:0 11.60px;">15</div>
<div class="t" style="left:372.5px;width:300px;text-align:center;top:917.40px;font-size:13.7px;color:#444;font-weight:400;transform:scaleY(1.12);transform-origin:0 11.60px;">7</div>
<div class="t" style="left:448.6px;width:300px;text-align:center;top:917.40px;font-size:13.7px;color:#444;font-weight:400;transform:scaleY(1.12);transform-origin:0 11.60px;">49</div>
<div class="t" style="left:510.29999999999995px;width:300px;text-align:center;top:917.40px;font-size:13.7px;color:#444;font-weight:400;transform:scaleY(1.12);transform-origin:0 11.60px;">138</div>
<div class="t" style="left:565.8px;width:300px;text-align:center;top:917.40px;font-size:13.7px;color:#444;font-weight:400;transform:scaleY(1.12);transform-origin:0 11.60px;">-115</div>
<div class="t" style="left:635.4px;width:300px;text-align:center;top:917.40px;font-size:13.7px;color:#444;font-weight:400;transform:scaleY(1.12);transform-origin:0 11.60px;">15:7</div>
<div class="t" style="left:708.4px;width:300px;text-align:center;top:917.40px;font-size:13.7px;color:#444;font-weight:400;transform:scaleY(1.12);transform-origin:0 11.60px;">68</div>
<div class="t" style="left:785.8px;width:300px;text-align:center;top:917.40px;font-size:13.7px;color:#444;font-weight:400;transform:scaleY(1.12);transform-origin:0 11.60px;">11</div>
<div class="t" style="left:873.2px;width:300px;text-align:center;top:917.40px;font-size:13.7px;color:#444;font-weight:400;transform:scaleY(1.12);transform-origin:0 11.60px;">5</div>
<div class="t" style="left:963.5px;width:300px;text-align:center;top:917.40px;font-size:13.7px;color:#444;font-weight:400;transform:scaleY(1.12);transform-origin:0 11.60px;">00:04:57</div>
<div class="t" style="left:1058px;width:300px;text-align:center;top:917.40px;font-size:13.7px;color:#444;font-weight:400;transform:scaleY(1.12);transform-origin:0 11.60px;">00:00:31</div>
<div style="position:absolute;left:11px;top:943.90px;width:1244px;height:43px;box-sizing:border-box;background:#eeeeee;border-top:1px solid #e6e6e6;border-bottom:1px solid #dddddd"></div><div class="t" style="left:-98.3px;width:300px;text-align:center;top:959.50px;font-size:13.7px;color:#444;font-weight:400;transform:scaleY(1.12);transform-origin:0 11.60px;">Aug 25</div>
<div class="t" style="left:-32.5px;width:300px;text-align:center;top:959.50px;font-size:13.7px;color:#444;font-weight:400;transform:scaleY(1.12);transform-origin:0 11.60px;">-843</div>
<div class="t" style="left:46.80000000000001px;width:300px;text-align:center;top:959.50px;font-size:13.7px;color:#444;font-weight:400;transform:scaleY(1.12);transform-origin:0 11.60px;">18</div>
<div class="t" style="left:135.89999999999998px;width:300px;text-align:center;top:959.50px;font-size:13.7px;color:#444;font-weight:400;transform:scaleY(1.12);transform-origin:0 11.60px;">33</div>
<div class="t" style="left:210.5px;width:300px;text-align:center;top:959.50px;font-size:13.7px;color:#444;font-weight:400;transform:scaleY(1.12);transform-origin:0 11.60px;">3</div>
<div class="t" style="left:291.3px;width:300px;text-align:center;top:959.50px;font-size:13.7px;color:#444;font-weight:400;transform:scaleY(1.12);transform-origin:0 11.60px;">0</div>
<div class="t" style="left:372.5px;width:300px;text-align:center;top:959.50px;font-size:13.7px;color:#444;font-weight:400;transform:scaleY(1.12);transform-origin:0 11.60px;">3</div>
<div class="t" style="left:448.6px;width:300px;text-align:center;top:959.50px;font-size:13.7px;color:#444;font-weight:400;transform:scaleY(1.12);transform-origin:0 11.60px;">-281</div>
<div class="t" style="left:510.29999999999995px;width:300px;text-align:center;top:959.50px;font-size:13.7px;color:#444;font-weight:400;transform:scaleY(1.12);transform-origin:0 11.60px;">0</div>
<div class="t" style="left:565.8px;width:300px;text-align:center;top:959.50px;font-size:13.7px;color:#444;font-weight:400;transform:scaleY(1.12);transform-origin:0 11.60px;">-270</div>
<div class="t" style="left:635.4px;width:300px;text-align:center;top:959.50px;font-size:13.7px;color:#444;font-weight:400;transform:scaleY(1.12);transform-origin:0 11.60px;">0:3</div>
<div class="t" style="left:708.4px;width:300px;text-align:center;top:959.50px;font-size:13.7px;color:#444;font-weight:400;transform:scaleY(1.12);transform-origin:0 11.60px;">0</div>
<div class="t" style="left:785.8px;width:300px;text-align:center;top:959.50px;font-size:13.7px;color:#444;font-weight:400;transform:scaleY(1.12);transform-origin:0 11.60px;">0</div>
<div class="t" style="left:873.2px;width:300px;text-align:center;top:959.50px;font-size:13.7px;color:#444;font-weight:400;transform:scaleY(1.12);transform-origin:0 11.60px;">3</div>
<div class="t" style="left:963.5px;width:300px;text-align:center;top:959.50px;font-size:13.7px;color:#444;font-weight:400;transform:scaleY(1.12);transform-origin:0 11.60px;">00:00:00</div>
<div class="t" style="left:1058px;width:300px;text-align:center;top:959.50px;font-size:13.7px;color:#444;font-weight:400;transform:scaleY(1.12);transform-origin:0 11.60px;">00:08:37</div>
<div class="t" style="left:-98.3px;width:300px;text-align:center;top:1001.60px;font-size:13.7px;color:#444;font-weight:400;transform:scaleY(1.12);transform-origin:0 11.60px;">Aug 24</div>
<div class="t" style="left:-32.5px;width:300px;text-align:center;top:1001.60px;font-size:13.7px;color:#444;font-weight:400;transform:scaleY(1.12);transform-origin:0 11.60px;">269</div>
<div class="t" style="left:46.80000000000001px;width:300px;text-align:center;top:1001.60px;font-size:13.7px;color:#444;font-weight:400;transform:scaleY(1.12);transform-origin:0 11.60px;">82</div>
<div class="t" style="left:135.89999999999998px;width:300px;text-align:center;top:1001.60px;font-size:13.7px;color:#444;font-weight:400;transform:scaleY(1.12);transform-origin:0 11.60px;">150</div>
<div class="t" style="left:210.5px;width:300px;text-align:center;top:1001.60px;font-size:13.7px;color:#444;font-weight:400;transform:scaleY(1.12);transform-origin:0 11.60px;">20</div>
<div class="t" style="left:291.3px;width:300px;text-align:center;top:1001.60px;font-size:13.7px;color:#444;font-weight:400;transform:scaleY(1.12);transform-origin:0 11.60px;">15</div>
<div class="t" style="left:372.5px;width:300px;text-align:center;top:1001.60px;font-size:13.7px;color:#444;font-weight:400;transform:scaleY(1.12);transform-origin:0 11.60px;">4</div>
<div class="t" style="left:448.6px;width:300px;text-align:center;top:1001.60px;font-size:13.7px;color:#444;font-weight:400;transform:scaleY(1.12);transform-origin:0 11.60px;">13</div>
<div class="t" style="left:510.29999999999995px;width:300px;text-align:center;top:1001.60px;font-size:13.7px;color:#444;font-weight:400;transform:scaleY(1.12);transform-origin:0 11.60px;">77</div>
<div class="t" style="left:565.8px;width:300px;text-align:center;top:1001.60px;font-size:13.7px;color:#444;font-weight:400;transform:scaleY(1.12);transform-origin:0 11.60px;">-185</div>
<div class="t" style="left:635.4px;width:300px;text-align:center;top:1001.60px;font-size:13.7px;color:#444;font-weight:400;transform:scaleY(1.12);transform-origin:0 11.60px;">15:4</div>
<div class="t" style="left:708.4px;width:300px;text-align:center;top:1001.60px;font-size:13.7px;color:#444;font-weight:400;transform:scaleY(1.12);transform-origin:0 11.60px;">78</div>
<div class="t" style="left:785.8px;width:300px;text-align:center;top:1001.60px;font-size:13.7px;color:#444;font-weight:400;transform:scaleY(1.12);transform-origin:0 11.60px;">7</div>
<div class="t" style="left:873.2px;width:300px;text-align:center;top:1001.60px;font-size:13.7px;color:#444;font-weight:400;transform:scaleY(1.12);transform-origin:0 11.60px;">2</div>
<div class="t" style="left:963.5px;width:300px;text-align:center;top:1001.60px;font-size:13.7px;color:#444;font-weight:400;transform:scaleY(1.12);transform-origin:0 11.60px;">00:06:30</div>
<div class="t" style="left:1058px;width:300px;text-align:center;top:1001.60px;font-size:13.7px;color:#444;font-weight:400;transform:scaleY(1.12);transform-origin:0 11.60px;">00:25:06</div>

</body></html>
